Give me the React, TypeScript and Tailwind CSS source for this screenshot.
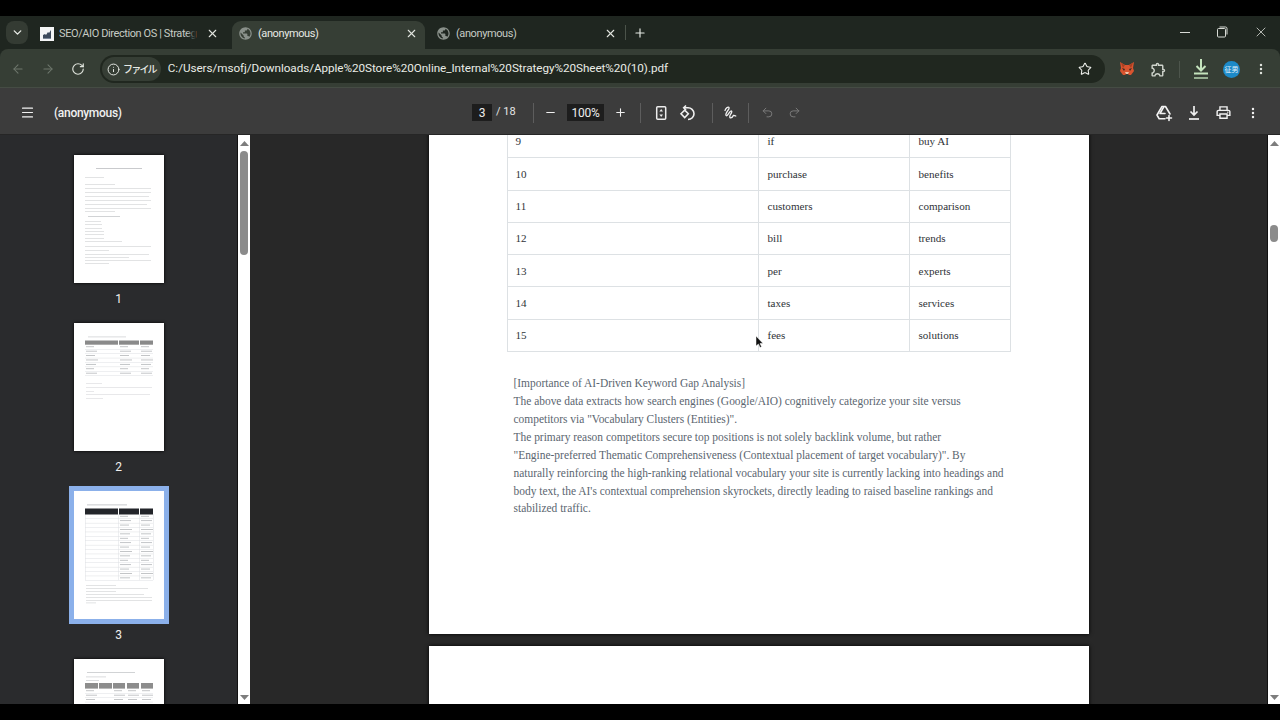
import React from "react";
import { ChevronDown, X, Plus, Minus, ArrowLeft, ArrowRight, RotateCw, Info, Star, Undo2, Redo2, Menu, EllipsisVertical } from "lucide-react";
import { MdOutlineExtension, MdOutlinePrint, MdPublic } from "react-icons/md";

const ui = "font-['Roboto',sans-serif]";

function Tab({ active, title, icon, className, fade }: { active?: boolean; title: string; icon: React.ReactNode; className: string; fade?: boolean }) {
  return (
    <div className={`relative flex h-[28px] items-center rounded-t-[9px] pb-[3px] pr-[7px] ${className} ${active ? "bg-[#363e35] text-[#e6e9e4]" : "text-[#c6cbc4]"}`}>
      <div className="flex w-[19px] shrink-0 items-center justify-center">{icon}</div>
      <div className="ml-[3px] min-w-0 flex-1 overflow-hidden whitespace-nowrap text-[11px] leading-[14px] tracking-[-0.4px]">{title}</div>
      {fade && <div className="absolute right-[30px] top-0 h-full w-[10px] bg-gradient-to-r from-transparent to-[#1f2620]" />}
      <X size={13} strokeWidth={2} className="ml-[6px] shrink-0 text-[#e2e5df]" />
    </div>
  );
}

function Favicon() {
  return (
    <svg width="14" height="14" viewBox="0 0 14 14">
      <rect width="14" height="14" fill="#f4f5f6" />
      <path d="M3 11V8l2-1 1 1 2-3 1 1 2-3v8z" fill="#3d4a5c" />
      <rect x="3" y="11" width="8" height="1" fill="#7a8696" />
    </svg>
  );
}

function Fox() {
  return (
    <svg width="16" height="16" viewBox="0 0 16 16">
      <path d="M1 1l5 3h4l5-3-1 6 1 3-3 4-2 0-1-1H7l-1 1H4L1 10l1-3z" fill="#d9542f" />
      <path d="M3 7l3 1-1 2zM13 7l-3 1 1 2z" fill="#3a2a22" />
      <path d="M6 11h4l-1 2H7z" fill="#f1c4a8" />
      <path d="M2 2l4 2-2 3zM14 2l-4 2 2 3z" fill="#a83f22" />
    </svg>
  );
}

function TopDownload() {
  return (
    <svg width="20" height="22" viewBox="0 0 20 22" fill="none" stroke="#c4e3bd" strokeWidth="2">
      <path d="M10 1v11M5.500 8l4.500 4.500L14.500 8" />
      <path d="M3 15.500h14" />
      <path d="M3 20h14" strokeWidth="1.600" opacity="0.85" />
    </svg>
  );
}

function PdfDownload() {
  return (
    <svg width="16" height="18" viewBox="0 0 16 18" fill="none" stroke="#f0f0f0" strokeWidth="1.700">
      <path d="M8 2v9M4.500 7.500L8 11l3.500-3.500" />
      <path d="M3 15h10" />
    </svg>
  );
}

function DriveAdd() {
  return (
    <svg width="18" height="18" viewBox="0 0 18 18" fill="none" stroke="#f4f4f4" strokeWidth="1.600" strokeLinejoin="round" strokeLinecap="round">
      <path d="M7 2.500h3.500L15 10M7 2.500L2 11l2.200 3.800H10" />
      <path d="M8.800 2.800L5 9.500h5" />
      <path d="M14 11.500v5M11.500 14h5" />
    </svg>
  );
}

function FitIcon() {
  return (
    <svg width="14" height="18" viewBox="0 0 14 18" fill="none">
      <rect x="2.700" y="2.700" width="9" height="12.600" rx="1" stroke="#ececec" strokeWidth="1.500" />
      <path d="M7.200 5L5.400 7.400H9zM7.200 13L5.400 10.600H9z" fill="#ececec" />
    </svg>
  );
}

function RotateIcon() {
  return (
    <svg width="18" height="18" viewBox="0 0 18 18" fill="none" stroke="#efefef" strokeWidth="1.600">
      <path d="M5.500 9.800L9.200 6.200l3.600 3.600-3.600 3.700z" transform="translate(-3.500 0)" />
      <path d="M7 1.500L4.700 3.800 7 6" />
      <path d="M5 3.800h3.500a6 6 0 0 1 6.500 6c0 3-2.500 5.700-6 5.700" />
    </svg>
  );
}

function AnnotateIcon() {
  return (
    <svg width="18" height="18" viewBox="0 0 18 18" fill="none" stroke="#f2f2f2" strokeWidth="1.300" strokeLinecap="round">
      <path d="M4 6.500c.8-2 2.700-4 3.800-3.300 1.200.8-1 3.300-2 5-1.100 1.800-1.300 3.500-.3 3.600 1.500.1 2.800-4.300 4.400-4.800 1.400-.4.900 1.700-.2 3.200-1.200 1.600-1.300 3.700 0 3.600 1.200 0 2.300-1.200 2.800-2.500.8-.1 1.500.2 2.300.7" />
    </svg>
  );
}

const Sep = ({ className }: { className: string }) => <div className={`h-[20px] w-px bg-[#5d5d5d] ${className}`} />;

const Box = ({ children, className }: { children: React.ReactNode; className: string }) => (
  <div className={`flex h-[17px] items-center justify-center bg-[#1d1d1d] text-[12px] text-[#ededed] ${className}`}>{children}</div>
);

type L = [number, number, number, number?];

function Thumb({ lines, bars, rows, selected }: { lines: L[]; bars?: { y: number; h: number; c: string; xs: [number, number][] }; rows?: { y0: number; dy: number; n: number; xs: number[]; cols?: number[] }; selected?: boolean }) {
  return (
    <div className={`h-[127.5px] w-[90px] shrink-0 bg-white ${selected ? "outline-[5px] outline-[#8bb0ea]" : "shadow-[0_0_3px_#000]"}`}>
      <svg width="90" height="127.500" viewBox="0 0 90 127.500">
        {rows &&
          Array.from({ length: rows.n }).map((_, i) => (
            <g key={i}>
              <rect x="11" y={rows.y0 + i * rows.dy} width="68" height="0.500" fill="#dcdfe2" />
              {rows.xs.map((x, j) => (
                <rect key={j} x={x} y={rows.y0 + i * rows.dy - rows.dy * 0.6} width={8 + ((i * 3 + j * 5) % 5)} height="0.800" fill="#b4b7ba" />
              ))}
            </g>
          ))}
        {rows && rows.cols && rows.cols.map((x) => <rect key={x} x={x} y={rows.y0 - rows.dy} width="0.500" height={rows.n * rows.dy} fill="#dcdfe2" />)}
        {bars && bars.xs.map(([x, w], i) => <rect key={i} x={x} y={bars.y} width={w} height={bars.h} fill={bars.c} />)}
        {lines.map(([x, y, w, o], i) => (
          <rect key={i} x={x} y={y} width={w} height="0.800" fill="#8d9196" opacity={o ?? 0.32} />
        ))}
      </svg>
    </div>
  );
}

const t1: L[] = [[22, 13, 46, 0.6], [11, 22, 19], [11, 29, 30], [11, 33, 66], [11, 37, 66], [11, 41, 64], [11, 45, 66], [11, 49, 62], [11, 53, 66], [11, 56, 30], [14, 61, 32, 0.5], [11, 66, 16], [11, 69, 17], [11, 73, 17], [11, 76, 19], [11, 79, 19], [11, 83, 19], [11, 86, 37], [11, 91, 66], [11, 95, 24], [11, 99, 64], [11, 102, 44], [11, 105, 66], [11, 108, 24]];
const t2: L[] = [[14, 13.500, 38, 0.4], [12, 60, 16, 0.25], [12, 64, 66, 0.25], [12, 68, 8, 0.25], [12, 71, 64, 0.25], [12, 75, 17, 0.25]];
const t3: L[] = [[13, 13.500, 40, 0.6], [12, 94, 30], [12, 97, 62], [12, 100, 30], [12, 103, 58], [12, 106, 66], [12, 109, 66], [12, 111.500, 10]];
const t4: L[] = [[13, 13, 48, 0.5], [12, 17.500, 20, 0.4], [12, 21, 13, 0.4]];

function ThumbItem({ n, children }: { n?: number; children: React.ReactNode }) {
  return (
    <div className="flex h-[168px] shrink-0 flex-col items-center">
      {children}
      {n && <div className={`mt-[8px] text-[12px] leading-[16px] text-[#f0f0f0] ${ui}`}>{n}</div>}
    </div>
  );
}

const Tri = ({ down }: { down?: boolean }) => (
  <svg width="9" height="5" viewBox="0 0 9 5" className="shrink-0">
    <path d={down ? "M0 0h9L4.500 5z" : "M0 5h9L4.500 0z"} fill="#7d7d7d" />
  </svg>
);

function Scrollbar({ thumbTop, thumbH }: { thumbTop: string; thumbH: string }) {
  return (
    <div className="flex h-full w-[13px] shrink-0 flex-col items-center border-l border-[#111] bg-white pb-[4px] pt-[6px]">
      <Tri />
      <div className={`w-[8px] rounded-[4px] bg-[#8b8b8b] ${thumbTop} ${thumbH}`} />
      <div className="flex-1" />
      <Tri down />
    </div>
  );
}

const rows = [
  ["9", "if", "buy AI"],
  ["10", "purchase", "benefits"],
  ["11", "customers", "comparison"],
  ["12", "bill", "trends"],
  ["13", "per", "experts"],
  ["14", "taxes", "services"],
  ["15", "fees", "solutions"],
];

const para = [
  "[Importance of AI-Driven Keyword Gap Analysis]",
  "The above data extracts how search engines (Google/AIO) cognitively categorize your site versus",
  'competitors via "Vocabulary Clusters (Entities)".',
  "The primary reason competitors secure top positions is not solely backlink volume, but rather",
  '"Engine-preferred Thematic Comprehensiveness (Contextual placement of target vocabulary)". By',
  "naturally reinforcing the high-ranking relational vocabulary your site is currently lacking into headings and",
  "body text, the AI's contextual comprehension skyrockets, directly leading to raised baseline rankings and",
  "stabilized traffic.",
];

export default function App() {
  return (
    <div className={`relative flex h-[720px] w-[1280px] flex-col overflow-hidden bg-black ${ui}`}>
      <div className="h-[16px] shrink-0 bg-black" />
      {/* tab strip */}
      <div className="flex h-[33px] shrink-0 items-end bg-[#1f2620] pl-[6px]">
        <div className="mb-[5px] flex h-[23px] w-[22px] items-center justify-center rounded-[8px] bg-[#343b33] text-[#e8ebe6]">
          <ChevronDown size={13} strokeWidth={2.500} />
        </div>
        <Tab title="SEO/AIO Direction OS | Strateg" icon={<Favicon />} className="ml-[6px] w-[192px] pl-[3px]" fade />
        <Tab active title="(anonymous)" icon={<MdPublic size={15} className="text-[#89908a]" />} className="ml-[6px] w-[193px] pl-[4px]" />
        <Tab title="(anonymous)" icon={<MdPublic size={15} className="text-[#89908a]" />} className="ml-[4px] w-[195px] pl-[5px]" />
        <div className="mb-[9px] ml-[1px] h-[15px] w-px bg-[#4b534a]" />
        <Plus size={14} strokeWidth={2} className="mb-[9px] ml-[7px] text-[#e6e9e4]" />
        <div className="flex-1" />
        <div className="mb-[9px] flex items-center text-[#d8dbd6]">
          <div className="h-px w-[10px] bg-[#d8dbd6]" />
          <svg width="12" height="12" viewBox="0 0 12 12" fill="none" stroke="#d8dbd6" className="ml-[26px]">
            <rect x="1.500" y="2.500" width="8" height="8.500" rx="1" />
            <path d="M3.500 1h6a1.500 1.500 0 0 1 1.500 1.500v6" />
          </svg>
          <X size={16} strokeWidth={1.200} className="ml-[25px] mr-[11px]" />
        </div>
      </div>
      {/* address bar */}
      <div className="h-[39px] shrink-0 bg-[#1f2620]">
        <div className="flex h-full items-center rounded-t-[8px] border-b border-[#454c44] bg-[#363e35] pl-[11px] pr-[10px] pt-[2px]">
          <ArrowLeft size={14} strokeWidth={1.800} className="text-[#6e776d]" />
          <ArrowRight size={14} strokeWidth={1.800} className="ml-[16px] text-[#6e776d]" />
          <RotateCw size={14} strokeWidth={2} className="ml-[16px] text-[#dfe3dc]" />
          <div className="ml-[15px] flex h-[28px] w-[1005px] items-center rounded-full bg-[#20271f] pl-[2px] pr-[13px]">
            <div className="flex h-[24px] items-center rounded-full bg-[#363e35] pl-[5px] pr-[5px] text-[#e6e9e4]">
              <Info size={13} strokeWidth={1.800} />
              <span className="ml-[3px] font-['Noto_Sans_CJK_JP',sans-serif] text-[10px] font-medium leading-none tracking-[-1.800px]">ファイル</span>
            </div>
            <div className="ml-[7px] flex-1 whitespace-nowrap text-[11.700px] tracking-[-0.05px] text-[#e9ece6]">C:/Users/msofj/Downloads/Apple%20Store%20Online_Internal%20Strategy%20Sheet%20(10).pdf</div>
            <Star size={14} strokeWidth={1.800} className="text-[#eef0ec]" />
          </div>
          <div className="ml-[14px]"><Fox /></div>
          <MdOutlineExtension size={17} className="ml-[15px] text-[#cfd4cc]" />
          <div className="ml-[12px] h-[17px] w-px bg-[#4d554c]" />
          <div className="ml-[11px]"><TopDownload /></div>
          <div className="ml-[12px] flex h-[17px] w-[17px] items-center justify-center rounded-full bg-[#1d8ac9] font-['Noto_Sans_CJK_JP',sans-serif] text-[7px] leading-none text-[#e6f3fb]">征男</div>
          <EllipsisVertical size={14} strokeWidth={2.200} className="ml-[14px] text-[#dfe3dc]" />
        </div>
      </div>
      {/* pdf toolbar */}
      <div className="flex h-[47px] shrink-0 items-center border-b border-[#262626] bg-[#3c3c3c] pl-[20px] pt-[3px] text-[#f1f1f1]">
        <Menu size={15} strokeWidth={1.800} />
        <div className="ml-[19px] w-[418px] text-[12px] font-medium leading-[16px] tracking-[-0.3px]">(anonymous)</div>
        <Box className="w-[20px]">3</Box>
        <div className="ml-[4px] w-[21px] whitespace-nowrap text-[11px] text-[#e6e6e6]">/ 18</div>
        <Sep className="ml-[16px]" />
        <Minus size={13} strokeWidth={2} className="ml-[10px]" />
        <Box className="ml-[10px] w-[37px] tracking-[-0.3px]">100%</Box>
        <Plus size={13} strokeWidth={2} className="ml-[10px]" />
        <Sep className="ml-[13px]" />
        <div className="ml-[13px]"><FitIcon /></div>
        <div className="ml-[11px]"><RotateIcon /></div>
        <Sep className="ml-[15px]" />
        <div className="ml-[8px]"><AnnotateIcon /></div>
        <Sep className="ml-[9px]" />
        <Undo2 size={13} strokeWidth={1.800} className="ml-[12px] text-[#7a7a7a]" />
        <Redo2 size={13} strokeWidth={1.800} className="ml-[14px] text-[#7a7a7a]" />
        <div className="flex-1" />
        <DriveAdd />
        <div className="ml-[13px]"><PdfDownload /></div>
        <MdOutlinePrint size={17} className="ml-[13px]" />
        <EllipsisVertical size={14} strokeWidth={2.200} className="ml-[14px] mr-[20px]" />
      </div>
      {/* body */}
      <div className="flex h-[569px] shrink-0 overflow-hidden">
        <div className="flex h-full w-[237px] shrink-0 flex-col items-center overflow-hidden bg-[#2a2b2d] pt-[20px]">
          <ThumbItem n={1}><Thumb lines={t1} /></ThumbItem>
          <ThumbItem n={2}>
            <Thumb lines={t2} bars={{ y: 17.500, h: 4.200, c: "#8a8a8a", xs: [[11, 33], [45, 20], [66, 13]] }} rows={{ y0: 26, dy: 4.400, n: 7, xs: [12, 46, 67] }} />
          </ThumbItem>
          <ThumbItem n={3}>
            <Thumb selected lines={t3} bars={{ y: 17.500, h: 6, c: "#23252a", xs: [[11, 33], [45, 20], [66, 13]] }} rows={{ y0: 27.500, dy: 4.400, n: 15, xs: [46, 67], cols: [11, 44.500, 65.500, 79] }} />
          </ThumbItem>
          <ThumbItem>
            <Thumb lines={t4} bars={{ y: 24, h: 5.600, c: "#8d8d8d", xs: [[11, 13], [25, 13], [39, 12], [53, 12], [67, 12]] }} rows={{ y0: 34, dy: 4.400, n: 3, xs: [12, 40, 54, 68] }} />
          </ThumbItem>
        </div>
        <Scrollbar thumbTop="mt-[5px]" thumbH="h-[104px]" />
        <div className="flex h-full min-w-0 flex-1 flex-col items-center overflow-hidden bg-[#282828]">
          <div className="-mt-[11px] h-[510px] w-[660px] shrink-0 bg-white pl-[78px] pt-px font-['Liberation_Serif',serif] shadow-[0_0_4px_#000]">
            <div className="grid w-[504px] grid-cols-[251px_151px_101px] border-b border-l border-[#dde1e4]">
              {rows.map((r) => (
                <React.Fragment key={r[0]}>
                  {r.map((c, j) => (
                    <div key={j} className={`flex h-[32.300px] items-center border-r border-t border-[#dde1e4] text-[11.100px] text-[#2f3338] ${j === 0 ? "pl-[8px]" : "pl-[9px]"}`}>{c}</div>
                  ))}
                </React.Fragment>
              ))}
            </div>
            <div className="ml-[7px] mt-[23px] whitespace-nowrap text-[11.450px] leading-[17.900px] text-[#5b6670]">
              {para.map((p) => (
                <div key={p}>{p}</div>
              ))}
            </div>
          </div>
          <div className="mt-[12px] h-[400px] w-[660px] shrink-0 bg-white shadow-[0_0_4px_#000]" />
        </div>
        <Scrollbar thumbTop="mt-[79px]" thumbH="h-[17px]" />
      </div>
      <div className="flex-1 bg-black" />
      <svg width="9" height="14" viewBox="0 0 9 14" className="absolute left-[755px] top-[335px]">
        <path d="M1 1v10l2.500-2 1.500 3.500 1.600-.7L5 8.500h3z" fill="#111" stroke="#fff" strokeWidth="0.500" />
      </svg>
    </div>
  );
}
